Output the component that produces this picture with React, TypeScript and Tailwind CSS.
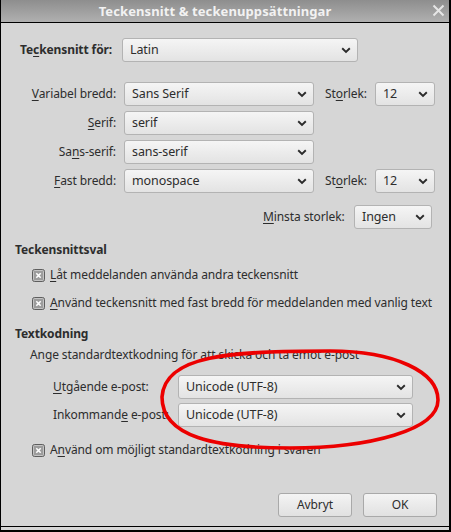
import React from "react"

// text with one keyboard-mnemonic letter underlined
function Mn({ text, u }: { text: string; u: number }) {
  return (
    <>
      {text.slice(0, u)}
      <span className="underline decoration-1 underline-offset-[2px]">{text[u]}</span>
      {text.slice(u + 1)}
    </>
  )
}

function Chevron() {
  return (
    <svg width="10" height="7" viewBox="0 0 10 7" className="shrink-0">
      <path d="M1.2 1.3 L5 5 L8.8 1.3" fill="none" stroke="#2b2b2b" strokeWidth="1.9" />
    </svg>
  )
}

function Select({ value, className }: { value: string; className: string }) {
  return (
    <div
      className={
        "flex h-[24px] items-center justify-between rounded-[3px] border border-[#b3b3b3] bg-gradient-to-b from-[#f5f5f5] to-[#e3e3e3] pl-[7px] pr-[6px] text-[12.5px] tracking-[-0.1px] " +
        className
      }
    >
      <span>{value}</span>
      <Chevron />
    </div>
  )
}

function Check({ children }: { children: React.ReactNode }) {
  return (
    <div className="flex h-[18px] items-center whitespace-nowrap pl-[31px]">
      <svg width="13" height="13" viewBox="0 0 13 13" className="mr-[5px] shrink-0">
        <rect x="0.5" y="0.5" width="12" height="12" rx="2" fill="#9c9c9c" stroke="#5e5e5e" />
        <rect x="1.5" y="1.5" width="10" height="10" rx="1" fill="none" stroke="#c4c4c4" />
        <path d="M4.3 4.3 L8.7 8.7 M8.7 4.3 L4.3 8.7" stroke="#ffffff" strokeWidth="1.6" />
      </svg>
      <span>{children}</span>
    </div>
  )
}

function FontRow({ label, u, value, size }: { label: string; u: number; value: string; size?: boolean }) {
  return (
    <div className="flex h-[24px] items-center">
      <div className="w-[115px] text-right">
        <Mn text={label} u={u} />
      </div>
      <Select value={value} className="ml-[8px] w-[190px]" />
      {size && (
        <>
          <div className="ml-[11px] w-[50px]">
            <Mn text="Storlek:" u={2} />
          </div>
          <Select value="12" className="w-[60px]" />
        </>
      )}
    </div>
  )
}

function Button({ label }: { label: string }) {
  return (
    <div className="flex h-[24px] w-[74px] items-center justify-center rounded-[3px] border border-[#a9a9a9] bg-gradient-to-b from-[#f4f4f4] to-[#e1e1e1]">
      {label}
    </div>
  )
}

export default function App() {
  return (
    <div className="relative flex h-[532px] w-[451px] flex-col border-l border-r-2 border-black bg-[#d6d6d6] font-['Noto_Sans',sans-serif] text-[12px] leading-[18px] tracking-[-0.1px] whitespace-nowrap text-[#2d2d2d]">
      {/* title bar */}
      <div className="relative flex h-[23px] shrink-0 items-center justify-center border-b border-black bg-gradient-to-b from-[#8e8e8e] to-[#b0b0b0] pr-[20px]">
        <span className="text-[13px] font-bold tracking-[0.1px] text-[#f2f2f2]">Teckensnitt &amp; teckenuppsättningar</span>
        <svg width="13" height="13" viewBox="0 0 13 13" className="absolute right-[4px] top-[4px]">
          <path d="M1.5 1.5 L11.5 11.5 M11.5 1.5 L1.5 11.5" stroke="#e6e6e6" strokeWidth="2" />
        </svg>
      </div>

      {/* body */}
      <div className="flex h-[504px] shrink-0 flex-col border-b border-black">
        <div className="mt-[15px] flex h-[24px] items-center pl-[19px]">
          <div className="w-[102px] font-bold">
            <Mn text="Teckensnitt för:" u={2} />
          </div>
          <Select value="Latin" className="w-[236px]" />
        </div>

        <div className="mt-[20px] flex flex-col gap-[5px]">
          <FontRow label="Variabel bredd:" u={0} value="Sans Serif" size />
          <FontRow label="Serif:" u={0} value="serif" />
          <FontRow label="Sans-serif:" u={2} value="sans-serif" />
          <FontRow label="Fast bredd:" u={0} value="monospace" size />
        </div>

        <div className="mt-[12px] flex h-[24px] items-center pl-[262px]">
          <div className="w-[91px]">
            <Mn text="Minsta storlek:" u={0} />
          </div>
          <Select value="Ingen" className="w-[78px]" />
        </div>

        <div className="mt-[12px] pl-[14px] font-bold">Teckensnittsval</div>
        <div className="mt-[7px]">
          <Check>
            <Mn text="Låt meddelanden använda andra teckensnitt" u={0} />
          </Check>
        </div>
        <div className="mt-[10px]">
          <Check>
            <Mn text="Använd teckensnitt med fast bredd för meddelanden med vanlig text" u={0} />
          </Check>
        </div>

        <div className="mt-[13px] pl-[14px] font-bold">Textkodning</div>
        <div className="mt-[3px] pl-[29px]">Ange standardtextkodning för att skicka och ta emot e-post</div>

        <div className="mt-[11px] flex flex-col gap-[4px] pl-[52px]">
          <div className="flex h-[24px] items-center">
            <div className="w-[125px]">
              <Mn text="Utgående e-post:" u={0} />
            </div>
            <Select value="Unicode (UTF-8)" className="w-[235px]" />
          </div>
          <div className="flex h-[24px] items-center">
            <div className="w-[125px]">
              <Mn text="Inkommande e-post:" u={9} />
            </div>
            <Select value="Unicode (UTF-8)" className="w-[235px]" />
          </div>
        </div>

        <div className="mt-[14px]">
          <Check>
            <Mn text="Använd om möjligt standardtextkodning i svaren" u={1} />
          </Check>
        </div>

        <div className="mt-[34px] flex justify-end gap-[11px] pr-[12px]">
          <Button label="Avbryt" />
          <Button label="OK" />
        </div>
      </div>
      <div className="h-[3px] shrink-0" />
      <div className="h-[2px] shrink-0 bg-black" />

      {/* hand-drawn red annotation loop over the encoding selects */}
      <svg width="451" height="532" className="pointer-events-none absolute left-[-1px] top-0">
        <path
          d="M162 397 C165 355 230 351 330 351 C395 351 438 372 438 400 C438 430 370 448 290 448 C215 448 162 437 162 397 Z"
          fill="none"
          stroke="#ec0000"
          strokeWidth="3.6"
        />
      </svg>
    </div>
  )
}
